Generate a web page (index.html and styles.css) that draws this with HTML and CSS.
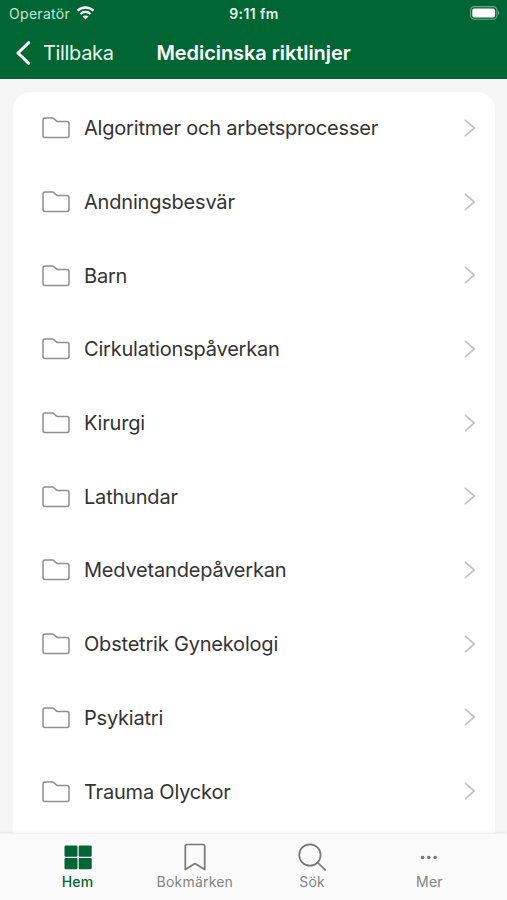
FILE: index.html
```html
<!DOCTYPE html>
<html lang="sv">
<head>
<meta charset="utf-8">
<title>Medicinska riktlinjer</title>
<link rel="stylesheet" href="styles.css">
</head>
<body>
<svg class="defs" width="0" height="0">
  <symbol id="folder" viewBox="0 0 28 22"><path d="M3 1.1h7.4c.7 0 1.1.2 1.6.7l2.3 2.1c.4.4.9.6 1.5.6H25c1.2 0 2 .8 2 2V18.600c0 1.200-.8 2-2 2H3c-1.200 0-2-.8-2-2V3.100c0-1.200.8-2 2-2z"/></symbol>
  <symbol id="chevron" viewBox="0 0 12 18"><path d="M1.500 1.300 10.200 9l-8.700 7.700"/></symbol>
</svg>
<div class="app">
  <header class="header">
    <div class="status">
      <div class="carrier"><span>Operatör</span>
        <svg class="wifi" viewBox="0 0 18 14"><path class="arc" d="M1 4.700c4.600-4.300 11.400-4.300 16 0M4 8c2.900-2.700 7.100-2.700 10 0"/><path class="dot" d="M9 13.600 6 10.500c1.700-1.500 4.300-1.500 6 0z"/></svg>
      </div>
      <span class="time">9:11 fm</span>
      <svg class="battery" viewBox="0 0 30 14"><rect class="shell" x=".6" y=".6" width="26.300" height="12.600" rx="3.600"/><rect class="charge" x="2.300" y="2.400" width="22.800" height="9" rx="2"/><path class="tip" d="M28 4.700c1.800.7 1.800 3.700 0 4.400z"/></svg>
    </div>
    <div class="nav">
      <div class="back"><svg viewBox="0 0 15 24"><path d="M12.700 1.700 2 12l10.700 10.300"/></svg><span>Tillbaka</span></div>
      <h1>Medicinska riktlinjer</h1>
    </div>
  </header>
  <main class="content">
    <ul class="list">
      <li class="row"><svg class="folder"><use href="#folder"/></svg><span class="label">Algoritmer och arbetsprocesser</span><svg class="chevron"><use href="#chevron"/></svg></li>
      <li class="row"><svg class="folder"><use href="#folder"/></svg><span class="label">Andningsbesvär</span><svg class="chevron"><use href="#chevron"/></svg></li>
      <li class="row"><svg class="folder"><use href="#folder"/></svg><span class="label">Barn</span><svg class="chevron"><use href="#chevron"/></svg></li>
      <li class="row"><svg class="folder"><use href="#folder"/></svg><span class="label">Cirkulationspåverkan</span><svg class="chevron"><use href="#chevron"/></svg></li>
      <li class="row"><svg class="folder"><use href="#folder"/></svg><span class="label">Kirurgi</span><svg class="chevron"><use href="#chevron"/></svg></li>
      <li class="row"><svg class="folder"><use href="#folder"/></svg><span class="label">Lathundar</span><svg class="chevron"><use href="#chevron"/></svg></li>
      <li class="row"><svg class="folder"><use href="#folder"/></svg><span class="label">Medvetandepåverkan</span><svg class="chevron"><use href="#chevron"/></svg></li>
      <li class="row"><svg class="folder"><use href="#folder"/></svg><span class="label">Obstetrik Gynekologi</span><svg class="chevron"><use href="#chevron"/></svg></li>
      <li class="row"><svg class="folder"><use href="#folder"/></svg><span class="label">Psykiatri</span><svg class="chevron"><use href="#chevron"/></svg></li>
      <li class="row"><svg class="folder"><use href="#folder"/></svg><span class="label">Trauma Olyckor</span><svg class="chevron"><use href="#chevron"/></svg></li>
    </ul>
  </main>
  <nav class="tabs">
    <div class="tab active"><svg viewBox="0 0 30 30"><g class="fill"><rect x="1.500" y="3.500" width="13" height="11.300" rx="1.200"/><rect x="15.700" y="3.500" width="13" height="11.300" rx="1.200"/><rect x="1.500" y="16" width="13" height="11.300" rx="1.200"/><rect x="15.700" y="16" width="13" height="11.300" rx="1.200"/></g></svg><span>Hem</span></div>
    <div class="tab"><svg viewBox="0 0 30 30"><path d="M7 2.500h16c1 0 1.700.7 1.700 1.700v23.300L15 21.600l-9.700 5.900V4.200c0-1 .7-1.700 1.700-1.700z"/></svg><span>Bokmärken</span></div>
    <div class="tab"><svg viewBox="0 0 30 30"><circle cx="12.900" cy="13" r="10.700"/><path d="m20.500 20.500 7.700 7.400"/></svg><span>Sök</span></div>
    <div class="tab"><svg viewBox="0 0 30 30"><g class="fill"><circle cx="8.500" cy="15.500" r="1.800"/><circle cx="14.800" cy="15.500" r="1.800"/><circle cx="21.100" cy="15.500" r="1.800"/></g></svg><span>Mer</span></div>
  </nav>
</div>
</body>
</html>
```
FILE: styles.css
```css
* { box-sizing: border-box; }
body { margin: 0; font-family: Inter, "Liberation Sans", sans-serif; }
.defs { display: block; }
svg { flex: none; fill: none; stroke-linecap: round; stroke-linejoin: round; }
.app { height: 900px; display: flex; flex-direction: column; overflow: hidden; background: #f5f5f5; }
.header { flex: none; height: 79px; background: #006633; color: #e9f7ee; }
.status { height: 27px; display: grid; grid-template-columns: 1fr auto 1fr; align-items: center; padding: 0 7px 0 9px; }
.carrier { display: flex; align-items: center; gap: 6px; font-size: 14px; letter-spacing: .3px; color: #cae4d5; }
.wifi { width: 19px; height: 14px; margin-top: -1px; }
.arc { stroke: #fff; stroke-width: 2.300; stroke-linecap: butt; }
.dot, .charge { fill: #fff; }
.time { font-size: 14px; font-weight: 600; letter-spacing: .4px; margin-right: 1px; }
.battery { width: 30px; height: 14px; justify-self: end; margin-top: -1px; }
.shell { stroke: #70a98a; stroke-width: 1.100; }
.tip { fill: #70a98a; }
.nav { height: 51px; display: grid; grid-template-columns: 1fr auto 1fr; align-items: center; padding: 0 16px; }
.back { display: flex; align-items: center; gap: 12px; font-size: 20px; letter-spacing: -.35px; }
.back svg { width: 15px; height: 24px; stroke: #fff; stroke-width: 3; }
h1 { margin: 0; font-size: 20px; font-weight: 600; letter-spacing: -.07px; color: #fff; }
.content { flex: 1; min-height: 0; padding: 13px 12.500px 0 13px; }
.list { display: flow-root; height: 100%; margin: 0; padding: 0; list-style: none; background: #fff; border-radius: 18px 18px 0 0; }
.row { height: 73.700px; display: flex; align-items: center; padding: 0 18.500px 0 29px; }
.row:first-child { margin-top: -.5px; }
.folder { width: 28px; height: 22px; margin-right: 14px; stroke: #8e8e8e; stroke-width: 1.500; }
.label { flex: 1; font-size: 20px; letter-spacing: -.2px; color: #333; }
.chevron { width: 12px; height: 18px; margin-top: -1px; stroke: #c4c4c4; stroke-width: 1.800; }
.tabs { flex: none; height: 67px; display: grid; grid-template-columns: repeat(4, 117.300px); justify-content: center; background: #fafafa; border-top: 1px solid #f2f2f2; box-shadow: 0 -1px 3px #0000000d; z-index: 1; }
.tab { display: flex; flex-direction: column; align-items: center; padding-top: 8px; gap: 1px; color: #858585; font-size: 14px; line-height: 18px; letter-spacing: .2px; }
.tab svg { width: 30px; height: 30px; stroke: #777; stroke-width: 1.700; }
.tab .fill { fill: #777; stroke: none; }
.active { color: #006633; font-weight: 500; }
.active .fill { fill: #006633; }
```
